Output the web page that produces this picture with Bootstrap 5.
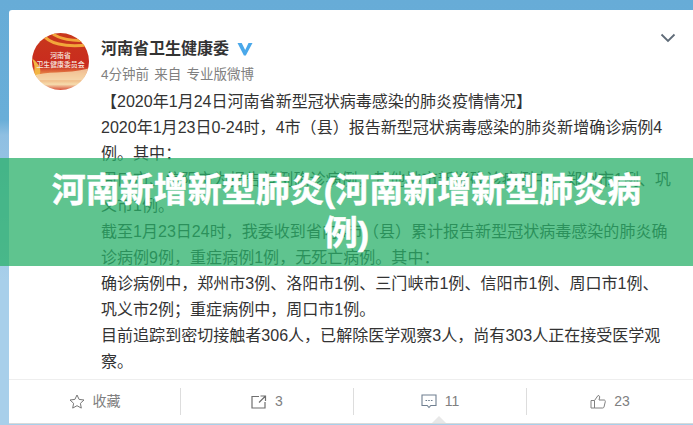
<!DOCTYPE html>
<html lang="zh-CN">
<head>
  <meta charset="UTF-8">
  <meta name="viewport" content="width=device-width, initial-scale=1.0">
  <title>河南新增新型肺炎</title>
  <link href="https://cdn.jsdelivr.net/npm/bootstrap@5.3.0/dist/css/bootstrap.min.css" rel="stylesheet">
  <style>
    html, body {
      margin: 0;
      height: 425px;
      overflow: hidden;
    }
    body {
      font-family: "Liberation Sans", "Noto Sans CJK SC", sans-serif;
      color: #333;
    }
    .shot {
      height: 425px;
      padding: 10px 0 0 9px;
      background: linear-gradient(180deg, #67acd7 0, #69aed8 120px, #8fbfe2 135px, #a8cfea 280px, #a8cfea 100%);
    }
    .post {
      height: 414px;
      background: #fff;
      border-bottom: 1px solid #d9d9d9;
      border-top-left-radius: 3px;
    }
    .post-head {
      height: 78px;
      padding: 23px 17px 0 23px;
    }
    .avatar {
      width: 57px;
      height: 57px;
      flex: none;
    }
    .who {
      margin-left: 12px;
    }
    .who-name {
      font-size: 16px;
      line-height: 20px;
      font-weight: 700;
      color: #333;
      margin-top: 6px;
    }
    .who-meta {
      font-size: 13.5px;
      line-height: 18px;
      word-spacing: 1.5px;
      color: #808080;
      margin-top: 7px;
    }
    .post-text {
      padding-left: 92px;
      height: 292px;
      font-size: 16.05px;
      line-height: 26px;
      white-space: nowrap;
      color: #333;
    }
    .post-foot {
      height: 44px;
      border-top: 1px solid #eee;
      position: relative;
      display: grid;
      grid-template-columns: 171px 173px 173px 1fr;
    }
    .foot-item {
      margin: 8px 0;
      height: 27px;
      border-left: 1px solid #ddd;
      font-size: 14px;
      color: #808080;
    }
    .foot-item:first-child {
      border-left: 0;
    }
    .foot-arrow {
      position: absolute;
      left: 423px;
      bottom: 0;
      width: 14px;
      height: 7px;
      background: #e8e8e8;
      clip-path: polygon(50% 0, 100% 100%, 0 100%);
    }
    .banner {
      position: absolute;
      left: 0;
      right: 0;
      top: 158px;
      height: 108px;
      background: rgba(41, 176, 105, .75);
    }
    .banner-title {
      width: 600px;
      font-size: 34px;
      line-height: 43px;
      font-weight: 700;
      color: #fff;
      text-align: center;
      -webkit-text-stroke: .5px #fff;
    }
  </style>
</head>
<body>
  <div class="shot position-relative">
    <div class="post d-flex flex-column">
      <div class="post-head d-flex align-items-start">
        <svg class="avatar" viewBox="0 0 58 58">
          <defs>
            <linearGradient id="av" x1="0" y1="0" x2="0" y2="1">
              <stop offset="0" stop-color="#c8381c"/>
              <stop offset=".58" stop-color="#c92a1e"/>
              <stop offset=".72" stop-color="#e8884a"/>
              <stop offset=".9" stop-color="#f6dcae"/>
              <stop offset="1" stop-color="#d8503a"/>
            </linearGradient>
            <clipPath id="avc"><circle cx="29" cy="29" r="29"/></clipPath>
          </defs>
          <g clip-path="url(#avc)">
            <rect width="58" height="58" fill="url(#av)"/>
            <path d="M10 0c6 11 24 15 48 12M20 0c7 6 22 9 38 7" fill="none" stroke="#f2a63a" stroke-width="3"/>
            <path d="M0 26c3 6 4 14 0 22l8-6c2-6-2-12-8-16z" fill="#f2b544"/>
            <path d="M0 44c14-6 34-2 58-8v12H0z" fill="#f7dfb6" opacity=".75"/>
          </g>
          <text x="29" y="25" text-anchor="middle" font-size="7" font-weight="500" fill="#f8ece0" font-family="'Noto Sans CJK SC', serif">河南省</text>
          <text x="29" y="35" text-anchor="middle" font-size="7" font-weight="500" fill="#f8ece0" font-family="'Noto Sans CJK SC', serif">卫生健康委员会</text>
        </svg>
        <div class="who flex-grow-1">
          <div class="who-name d-flex align-items-center">河南省卫生健康委
            <svg class="ms-2" width="16" height="14" viewBox="0 0 16 14"><path d="M0.500 1h4.200l3.500 7 3.300-7h4L8.800 13.500H6.900z" fill="#4aa8ea"/></svg>
          </div>
          <div class="who-meta">4分钟前 来自 专业版微博</div>
        </div>
        <svg width="16" height="10" viewBox="0 0 16 10"><path d="M1.500 1.500l6.500 6.500 6.500-6.500" fill="none" stroke="#5f6b78" stroke-width="1.800"/></svg>
      </div>
      <div class="post-text">
        <div>【2020年1月24日河南省新型冠状病毒感染的肺炎疫情情况】</div>
        <div>2020年1月23日0-24时，4市（县）报告新型冠状病毒感染的肺炎新增确诊病例4</div>
        <div>例。其中：</div>
        <div>周口市、信阳市为报告首例确诊病例，其他地市新增确诊病例中，郑州市1例、巩</div>
        <div>义市1例。</div>
        <div>截至1月23日24时，我委收到省内4市（县）累计报告新型冠状病毒感染的肺炎确</div>
        <div>诊病例9例，重症病例1例，无死亡病例。其中：</div>
        <div>确诊病例中，郑州市3例、洛阳市1例、三门峡市1例、信阳市1例、周口市1例、</div>
        <div>巩义市2例；重症病例中，周口市1例。</div>
        <div>目前追踪到密切接触者306人，已解除医学观察3人，尚有303人正在接受医学观</div>
        <div>察。</div>
      </div>
      <div class="post-foot">
        <div class="foot-item d-flex align-items-center justify-content-center gap-2">
          <svg width="16" height="15" viewBox="0 0 16 15"><path d="M8 1l2.100 4.400 4.900.6-3.600 3.300.9 4.800L8 11.700l-4.300 2.400.9-4.800L1 6l4.900-.6z" fill="none" stroke="#777" stroke-width="1"/></svg>
          <span>收藏</span>
        </div>
        <div class="foot-item d-flex align-items-center justify-content-center gap-2">
          <svg width="16" height="14" viewBox="0 0 16 14"><path d="M8 1.500H1v11.500h13V7M9.500 1h5v5M14.500 1L8 7.500" fill="none" stroke="#6f6f6f" stroke-width="1.200"/></svg>
          <span>3</span>
        </div>
        <div class="foot-item d-flex align-items-center justify-content-center gap-2">
          <svg width="16" height="15" viewBox="0 0 16 15"><path d="M1 1h14v10.500H9.800L8 13.500l-1.800-2H1z" fill="none" stroke="#6f7f90" stroke-width="1.100"/><path d="M4.500 6.500h1.600M7.200 6.500h1.600M9.900 6.500h1.600" stroke="#6f7f90" stroke-width="1.200"/></svg>
          <span>11</span>
        </div>
        <div class="foot-item d-flex align-items-center justify-content-center gap-2">
          <svg width="16" height="15" viewBox="0 0 16 15"><path d="M4.500 6.500H1v7.500h3.500zM4.500 6.500L8 1.500c1.500 0 2 1 1.500 2.500L9 6h5c1 0 1.500.8 1.300 1.600l-1.300 5.400c-.2.700-.7 1-1.300 1H4.500" fill="none" stroke="#808080" stroke-width="1"/></svg>
          <span>23</span>
        </div>
        <div class="foot-arrow"></div>
      </div>
    </div>
    <div class="banner d-flex align-items-center justify-content-center">
      <div class="banner-title">河南新增新型肺炎(河南新增新型肺炎病例)</div>
    </div>
  </div>
</body>
</html>
